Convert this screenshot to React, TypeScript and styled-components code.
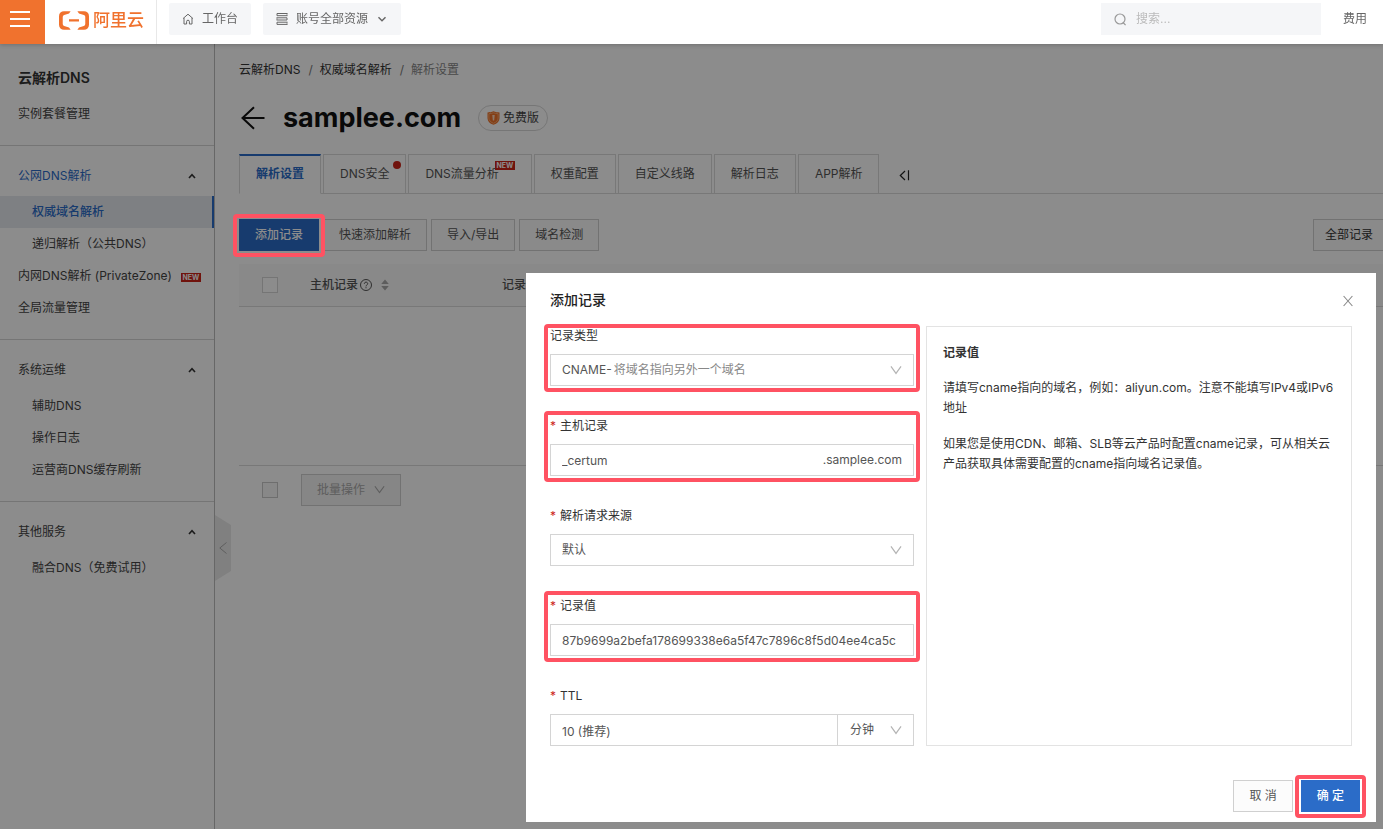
import React from 'react';
import styled, { createGlobalStyle, css } from 'styled-components';

const color = {
  brand: '#f0722e',
  primary: '#2b6cc8',
  danger: '#cc2418',
  mark: '#ff5262',
  text: '#555',
  textDark: '#333',
  textMuted: '#888',
  border: '#d4d4d4',
  line: '#dadada',
  soft: '#f5f6f8',
};

const GlobalStyle = createGlobalStyle`
  *, *::before, *::after { box-sizing: border-box; }
  body {
    margin: 0;
    background: #fff;
    color: ${color.textDark};
    font: 12px/20px Inter, "Noto Sans CJK SC", sans-serif;
  }
  button, input, select { font: inherit; color: inherit; margin: 0; }
  button { cursor: pointer; }
  a { color: inherit; text-decoration: none; }
  h1, h2, h3, p, ul, ol { margin: 0; padding: 0; }
  ul, ol { list-style: none; }
  svg { display: block; flex: none; }
`;

const Page = styled.div`
  display: flex;
  flex-direction: column;
  min-height: 100vh;
`;

/* Top bar */

const TopBar = styled.header`
  position: sticky;
  top: 0;
  z-index: 20;
  display: flex;
  height: 44px;
  padding-right: 16px;
  background: #fff;
  box-shadow: 0 1px 4px rgba(0, 0, 0, 0.2);
  color: #666;
`;

const MenuButton = styled.button`
  display: flex;
  width: 45px;
  padding: 11px 0 0 10px;
  border: 0;
  background: ${color.brand};
`;

const Brand = styled.a`
  display: flex;
  align-items: center;
  gap: 4px;
  padding: 0 12px 4px 14px;
  margin-right: 12px;
  border-right: 1px solid #e8e8e8;
  color: ${color.brand};
  font-size: 17px;
  font-weight: 500;
`;

const TopButton = styled.button`
  display: flex;
  align-items: center;
  height: 32px;
  margin: 3px 12px 0 0;
  padding: 0 13px;
  gap: 8px;
  border: 0;
  border-radius: 2px;
  background: ${color.soft};
  white-space: nowrap;
`;

const SearchBox = styled.label`
  display: flex;
  align-items: center;
  gap: 9px;
  width: 220px;
  height: 32px;
  margin: 3px 22px 0 auto;
  padding: 0 13px;
  background: ${color.soft};
  color: #999;
`;

const SearchInput = styled.input`
  flex: 1;
  min-width: 0;
  padding: 0;
  border: 0;
  outline: 0;
  background: transparent;
  &::placeholder { color: #bbb; }
`;

const TopLink = styled.a`
  height: 32px;
  margin-top: 3px;
  line-height: 32px;
`;

/* Sidebar */

const Body = styled.div`
  display: flex;
  flex: 1;
`;

const Sidebar = styled.nav`
  position: relative;
  flex: none;
  width: 215px;
  padding-top: 4px;
  border-right: 1px solid #bcbcbc;
`;

const NavGroup = styled.section`
  padding: 14px 0 15px;
  & + & { border-top: 1px solid #d6d6d6; }
`;

const NavTitle = styled.h2`
  margin-bottom: 4px;
  padding-left: 18px;
  font-size: 14px;
  font-weight: 600;
  line-height: 32px;
`;

const NavToggle = styled.button<{ $active?: boolean }>`
  display: flex;
  align-items: center;
  justify-content: space-between;
  width: 100%;
  height: 32px;
  margin-bottom: 4px;
  padding: 0 18px;
  border: 0;
  background: transparent;
  color: ${(p) => (p.$active ? color.primary : '#444')};
  svg { color: ${color.textDark}; }
`;

const NavLink = styled.a<{ $sub?: boolean; $active?: boolean }>`
  display: flex;
  align-items: center;
  gap: 9px;
  height: 32px;
  padding-left: ${(p) => (p.$sub ? 32 : 18)}px;
  color: #444;
  white-space: nowrap;
  ${(p) =>
    p.$active &&
    css`
      border-right: 2px solid ${color.primary};
      background: #e6eaee;
      color: ${color.primary};
      font-weight: 500;
    `}
`;

const NewBadge = styled.span`
  width: 20px;
  height: 9px;
  margin-top: 2px;
  background: ${color.danger};
  color: #fff;
  font-size: 7px;
  font-weight: 700;
  line-height: 9px;
  text-align: center;
`;

const CollapseButton = styled.button`
  position: absolute;
  top: 471px;
  left: calc(100% + 1px);
  display: flex;
  align-items: center;
  justify-content: center;
  width: 16px;
  height: 66px;
  padding: 0;
  border: 0;
  background: #eaeaea;
  clip-path: polygon(0 0, 100% 15%, 100% 85%, 0 100%);
  color: #aaa;
`;

/* Main column */

const Main = styled.main`
  flex: 1;
  min-width: 0;
  padding: 16px 0 24px 24px;
  overflow-x: clip;
`;

const Breadcrumb = styled.ol`
  display: flex;
  gap: 8px;
  li:last-child { color: ${color.textMuted}; }
  li + li::before {
    content: "/";
    margin-right: 7px;
    color: #777;
  }
`;

const TitleRow = styled.div`
  display: flex;
  align-items: center;
  margin: 20px 0 18px;
`;

const BackLink = styled.a`
  margin-right: 17px;
  color: #111;
`;

const Domain = styled.h1`
  color: #111;
  font-size: 27px;
  font-weight: 700;
  line-height: 36px;
`;

const PlanTag = styled.span`
  display: flex;
  align-items: center;
  gap: 3px;
  height: 26px;
  margin-left: 17px;
  padding: 0 8px;
  border: 1px solid #d8d8d8;
  border-radius: 13px;
  color: #444;
`;

const TabBar = styled.div`
  display: flex;
  gap: 2px;
  height: 40px;
  border-bottom: 1px solid ${color.line};
`;

const Tab = styled.button<{ $active?: boolean; $wide?: boolean }>`
  position: relative;
  height: 40px;
  padding: 0 ${(p) => (p.$wide ? 32 : 16)}px 0 16px;
  border: 1px solid ${color.line};
  background: #fff;
  color: ${color.text};
  white-space: nowrap;
  ${(p) =>
    p.$active &&
    css`
      padding-bottom: 1px;
      border-top: 2px solid ${color.primary};
      border-bottom-color: #fff;
      color: ${color.primary};
      font-weight: 600;
    `}
`;

const TabBadge = styled(NewBadge)`
  position: absolute;
  top: 6px;
  right: 16px;
  margin: 0;
`;

const TabDot = styled.span`
  position: absolute;
  top: 6px;
  right: 4px;
  width: 8px;
  height: 8px;
  border-radius: 50%;
  background: ${color.danger};
`;

const TabFold = styled.button`
  padding: 2px 18px 0;
  border: 0;
  background: transparent;
  color: #222;
`;

const Toolbar = styled.div`
  display: flex;
  gap: 4px;
  margin: 25px 0 13px;
`;

const Marked = styled.div`
  position: relative;
`;

const Mark = styled.span<{ $top?: number }>`
  position: absolute;
  z-index: 30;
  inset: ${(p) => p.$top ?? -5}px -6px -6px;
  border: 4px solid ${color.mark};
  border-radius: 4px;
  pointer-events: none;
`;

const Button = styled.button<{ $primary?: boolean }>`
  height: 32px;
  padding: 0 15px;
  border: 1px solid ${(p) => (p.$primary ? color.primary : '#d0d0d0')};
  background: ${(p) => (p.$primary ? color.primary : '#fcfcfc')};
  color: ${(p) => (p.$primary ? '#fff' : color.text)};
  font-weight: ${(p) => (p.$primary ? 500 : 400)};
  white-space: nowrap;
`;

const FilterButton = styled(Button)`
  margin-left: auto;
  padding: 0 10px 0 11px;
  border-right: 0;
  color: ${color.textDark};
`;

const RecordTable = styled.table`
  width: 100%;
  border-collapse: collapse;
  table-layout: fixed;
  thead tr { height: 42px; background: #fafafa; }
  tbody tr { height: 159px; }
  tr { border-bottom: 1px solid ${color.line}; }
  th {
    padding: 0;
    color: ${color.text};
    font-weight: 500;
    text-align: left;
    vertical-align: middle;
  }
`;

const CheckColumn = styled.col`
  width: 71px;
`;

const HostColumn = styled.col`
  width: 192px;
`;

const HeadCell = styled.div`
  display: flex;
  align-items: center;
  gap: 2px;
`;

const SortButton = styled.button`
  margin-left: 7px;
  padding: 0;
  border: 0;
  background: transparent;
  color: #aaa;
`;

const Checkbox = styled.input`
  appearance: none;
  display: block;
  width: 16px;
  height: 16px;
  margin-left: 23px;
  border: 1px solid #d6d6d6;
  background: #fff;
  &:disabled { border-color: #c8c8c8; background: #f8f8f8; }
`;

const BatchBar = styled.div`
  display: flex;
  align-items: center;
  gap: 23px;
  padding-top: 8px;
`;

const BatchButton = styled(Button)`
  display: flex;
  align-items: center;
  gap: 9px;
  background: #f4f4f4;
  color: #aaa;
`;

/* Dialog */

const Overlay = styled.div`
  position: fixed;
  inset: 0;
  z-index: 10;
  display: flex;
  align-items: flex-end;
  justify-content: flex-end;
  padding: 7px;
  background: rgba(0, 0, 0, 0.45);
`;

const Dialog = styled.section`
  width: 850px;
  max-width: 100%;
  padding: 17px 24px 10px;
  background: #fff;
`;

const DialogHead = styled.header`
  display: flex;
  align-items: center;
  justify-content: space-between;
  margin-bottom: 16px;
  h2 { font-size: 14px; font-weight: 500; color: #222; }
`;

const CloseButton = styled.button`
  padding: 2px 0 0;
  border: 0;
  background: transparent;
  color: #888;
  svg { margin-right: -1px; }
`;

const DialogBody = styled.div`
  display: flex;
  gap: 12px;
`;

const Form = styled.form`
  display: flex;
  flex: 0 0 364px;
  flex-direction: column;
  gap: 30px;
`;

const Field = styled.div`
  position: relative;
`;

const Label = styled.label<{ $required?: boolean }>`
  display: block;
  margin-bottom: 8px;
  ${(p) =>
    p.$required &&
    css`
      &::before {
        content: "*";
        margin-right: 4px;
        color: ${color.danger};
      }
    `}
`;

const Control = styled.div`
  display: flex;
  align-items: center;
  height: 32px;
  padding: 0 11px;
  border: 1px solid ${color.border};
  background: #fff;
  color: ${color.text};
  svg { color: #b4b4b4; }
`;

const TextInput = styled.input`
  flex: 1;
  min-width: 0;
  height: 30px;
  padding: 0;
  border: 0;
  outline: 0;
  background: transparent;
`;

const Select = styled.select<{ $muted?: boolean }>`
  appearance: none;
  flex: 1;
  min-width: 0;
  height: 30px;
  padding: 0;
  border: 0;
  outline: 0;
  background: transparent;
  color: ${(p) => (p.$muted ? '#888' : color.text)};
`;

const TypeCode = styled.span`
  margin-right: 2px;
`;

const TtlGroup = styled.div`
  display: flex;
`;

const TtlValue = styled(Control)`
  flex: 1;
`;

const TtlUnit = styled(Control)`
  width: 76px;
  padding-left: 12px;
  border-left: 0;
`;

const HelpPanel = styled.aside`
  flex: 1;
  min-width: 0;
  padding: 16px 15px 15px 16px;
  border: 1px solid #e3e3e3;
  h3 { font-size: 12px; font-weight: 600; }
  p { margin-top: 15px; }
  p + p { margin-top: 16px; }
`;

const DialogFoot = styled.footer`
  display: flex;
  justify-content: flex-end;
  gap: 8px;
  margin: 34px -8px 0 0;
`;

/* Icons */

const MenuIcon = () => (
  <svg width="20" height="16" fill="#fff" aria-hidden="true">
    <path d="M0 0h20v2H0zM0 7h20v2H0zM0 14h20v2H0z" />
  </svg>
);

const LogoIcon = () => (
  <svg width="30" height="19" viewBox="0 4.5 24 15" fill="currentColor" aria-hidden="true">
    <path d="M3.996 4.517h5.291L8.01 6.324 4.153 7.506a1.668 1.668 0 0 0-1.165 1.601v5.786a1.668 1.668 0 0 0 1.165 1.6l3.857 1.183 1.277 1.807H3.996A3.996 3.996 0 0 1 0 15.487V8.513a3.996 3.996 0 0 1 3.996-3.996m16.008 0h-5.291l1.277 1.807 3.857 1.182c.715.227 1.17.889 1.165 1.601v5.786a1.668 1.668 0 0 1-1.165 1.6l-3.857 1.183-1.277 1.807h5.291A3.996 3.996 0 0 0 24 15.487V8.513a3.996 3.996 0 0 0-3.996-3.996m-4.007 8.345H8.002v-1.804h7.995Z" />
  </svg>
);

const HomeIcon = () => (
  <svg width="12" height="12" viewBox="0 0 12 12" fill="none" stroke="currentColor" aria-hidden="true">
    <path d="M1 5.6 6 1.2l5 4.4M2 5v6h2.6V8.6a1.4 1.4 0 0 1 2.8 0V11H10V5" />
  </svg>
);

const StackIcon = () => (
  <svg width="12" height="12" viewBox="0 0 12 12" fill="none" stroke="currentColor" aria-hidden="true">
    <path d="M11.500.5H1v2.200h10.500M.5 4.800H11v2.200H.5M11.500 9.200H1v2.200h10.500" />
    <path d="M11 .5v2.200M1 4.800v2.200M11 9.200v2.200" strokeWidth=".6" />
  </svg>
);

const SearchIcon = () => (
  <svg width="13" height="13" viewBox="0 0 13 13" fill="none" stroke="currentColor" strokeWidth="1.2" aria-hidden="true">
    <circle cx="6" cy="6" r="5" />
    <path d="m9 9.500 2.600 2.600" />
  </svg>
);

const Chevron = ({ size = 10 }: { size?: number }) => (
  <svg width={size} height={size} viewBox="0 0 10 10" fill="none" stroke="currentColor" aria-hidden="true">
    <path d="M.8 2 5 7.800 9.200 2" />
  </svg>
);

const FoldUpIcon = () => (
  <svg width="8" height="8" viewBox="0 0 8 8" fill="none" stroke="currentColor" strokeWidth="1.600" aria-hidden="true">
    <path d="M1 6l3-3.400L7 6" />
  </svg>
);

const TopChevron = () => (
  <svg width="12" height="10" viewBox="0 0 12 10" fill="none" stroke="currentColor" strokeWidth="1.400" aria-hidden="true">
    <path d="M2.500 3.200 6 6.800l3.500-3.600" />
  </svg>
);

const CollapseIcon = () => (
  <svg width="8" height="12" viewBox="0 0 8 12" fill="none" stroke="currentColor" aria-hidden="true">
    <path d="M7.500.5.8 6l6.700 5.500" />
  </svg>
);

const BackIcon = () => (
  <svg width="27" height="24" viewBox="0 0 27 24" fill="none" stroke="currentColor" strokeWidth="2" aria-hidden="true">
    <path d="M25.500 12H3.500M15 1.200 3.500 12 15 22.800" />
  </svg>
);

const ShieldIcon = () => (
  <svg width="13" height="14" viewBox="0 0 13 14" aria-hidden="true">
    <path d="M6.500.3c2 .9 4 1.100 6 1.100v5.800c0 3-2.200 5.200-6 6.600C2.700 12.400.5 10.200.5 7.200V1.400c2 0 4-.2 6-1.100z" fill="#f0742a" />
    <path d="M6.500 1.800c1.500.6 3 .8 4.600.9v4.400c0 2.400-1.700 4-4.600 5.200-2.900-1.200-4.600-2.800-4.600-5.200V2.700c1.600-.1 3.100-.3 4.600-.9z" fill="none" stroke="#ffc79c" strokeWidth=".6" />
    <path d="M5.300 4h2.400l-.5 5.400h-1.400z" fill="#ffd9bd" />
  </svg>
);

const FoldIcon = () => (
  <svg width="12" height="12" viewBox="0 0 12 12" fill="none" stroke="currentColor" strokeWidth="1.200" aria-hidden="true">
    <path d="M6 2 1.300 6.500 6 11M9.500 1.200v10" />
  </svg>
);

const HelpIcon = () => (
  <svg width="12" height="12" viewBox="0 0 12 12" fill="none" stroke="currentColor" aria-hidden="true">
    <circle cx="6" cy="6" r="5.500" />
    <path d="M4.300 4.800C4.300 2.600 7.700 2.600 7.700 4.700 7.700 6 6 5.900 6 7.400M6 8.200v1.100" />
  </svg>
);

const SortIcon = () => (
  <svg width="8" height="12" viewBox="0 0 8 12" fill="currentColor" aria-hidden="true">
    <path d="m4 .5 3.800 4.500H.2zM4 11.500.2 7h7.600z" />
  </svg>
);

const CloseIcon = () => (
  <svg width="10" height="12" viewBox="0 0 10 12" fill="none" stroke="currentColor" strokeWidth="1.100" aria-hidden="true">
    <path d="m.6 1 8.800 10M9.400 1 .6 11" />
  </svg>
);

export default function App() {
  return (
    <Page>
      <GlobalStyle />
      <TopBar>
        <MenuButton aria-label="菜单">
          <MenuIcon />
        </MenuButton>
        <Brand href="#home">
          <LogoIcon />
          阿里云
        </Brand>
        <TopButton>
          <HomeIcon />
          工作台
        </TopButton>
        <TopButton>
          <StackIcon />
          账号全部资源
          <TopChevron />
        </TopButton>
        <SearchBox>
          <SearchIcon />
          <SearchInput type="text" placeholder="搜索..." aria-label="搜索" />
        </SearchBox>
        <TopLink href="#billing">费用</TopLink>
      </TopBar>

      <Body>
        <Sidebar>
          <NavGroup>
            <NavTitle>云解析DNS</NavTitle>
            <NavLink href="#plans">实例套餐管理</NavLink>
          </NavGroup>
          <NavGroup>
            <NavToggle $active>
              公网DNS解析
              <FoldUpIcon />
            </NavToggle>
            <NavLink href="#authority" $sub $active>权威域名解析</NavLink>
            <NavLink href="#recursive" $sub>递归解析（公共DNS）</NavLink>
            <NavLink href="#private">
              内网DNS解析 (PrivateZone)
              <NewBadge>NEW</NewBadge>
            </NavLink>
            <NavLink href="#traffic">全局流量管理</NavLink>
          </NavGroup>
          <NavGroup>
            <NavToggle>
              系统运维
              <FoldUpIcon />
            </NavToggle>
            <NavLink href="#secondary" $sub>辅助DNS</NavLink>
            <NavLink href="#log" $sub>操作日志</NavLink>
            <NavLink href="#flush" $sub>运营商DNS缓存刷新</NavLink>
          </NavGroup>
          <NavGroup>
            <NavToggle>
              其他服务
              <FoldUpIcon />
            </NavToggle>
            <NavLink href="#hybrid" $sub>融合DNS（免费试用）</NavLink>
          </NavGroup>
          <CollapseButton aria-label="收起">
            <CollapseIcon />
          </CollapseButton>
        </Sidebar>

        <Main>
          <Breadcrumb>
            <li><a href="#dns">云解析DNS</a></li>
            <li><a href="#authority">权威域名解析</a></li>
            <li>解析设置</li>
          </Breadcrumb>

          <TitleRow>
            <BackLink href="#back" aria-label="返回">
              <BackIcon />
            </BackLink>
            <Domain>samplee.com</Domain>
            <PlanTag>
              <ShieldIcon />
              免费版
            </PlanTag>
          </TitleRow>

          <TabBar role="tablist">
            <Tab role="tab" aria-selected $active>解析设置</Tab>
            <Tab role="tab">DNS安全<TabDot /></Tab>
            <Tab role="tab" $wide>DNS流量分析<TabBadge>NEW</TabBadge></Tab>
            <Tab role="tab">权重配置</Tab>
            <Tab role="tab">自定义线路</Tab>
            <Tab role="tab">解析日志</Tab>
            <Tab role="tab">APP解析</Tab>
            <TabFold aria-label="折叠">
              <FoldIcon />
            </TabFold>
          </TabBar>

          <Toolbar>
            <Marked>
              <Button $primary>添加记录</Button>
              <Mark />
            </Marked>
            <Button>快速添加解析</Button>
            <Button>导入/导出</Button>
            <Button>域名检测</Button>
            <FilterButton>全部记录</FilterButton>
          </Toolbar>

          <RecordTable>
            <colgroup>
              <CheckColumn />
              <HostColumn />
              <col />
            </colgroup>
            <thead>
              <tr>
                <th><Checkbox type="checkbox" aria-label="全选" /></th>
                <th>
                  <HeadCell>
                    主机记录
                    <HelpIcon />
                    <SortButton aria-label="排序"><SortIcon /></SortButton>
                  </HeadCell>
                </th>
                <th>记录类型</th>
              </tr>
            </thead>
            <tbody>
              <tr><td colSpan={3} /></tr>
            </tbody>
          </RecordTable>

          <BatchBar>
            <Checkbox type="checkbox" aria-label="选择全部" disabled />
            <BatchButton disabled>
              批量操作
              <Chevron size={11} />
            </BatchButton>
          </BatchBar>
        </Main>
      </Body>

      <Overlay>
        <Dialog role="dialog" aria-labelledby="dialog-title">
          <DialogHead>
            <h2 id="dialog-title">添加记录</h2>
            <CloseButton aria-label="关闭"><CloseIcon /></CloseButton>
          </DialogHead>

          <DialogBody>
            <Form id="record-form">
              <Field>
                <Label htmlFor="type">记录类型</Label>
                <Control>
                  <TypeCode>CNAME-</TypeCode>
                  <Select id="type" $muted>
                    <option>将域名指向另外一个域名</option>
                  </Select>
                  <Chevron size={12} />
                </Control>
                <Mark $top={-2} />
              </Field>
              <Field>
                <Label htmlFor="host" $required>主机记录</Label>
                <Control>
                  <TextInput id="host" type="text" defaultValue="_certum" />
                  <span>.samplee.com</span>
                </Control>
                <Mark />
              </Field>
              <Field>
                <Label htmlFor="line" $required>解析请求来源</Label>
                <Control>
                  <Select id="line">
                    <option>默认</option>
                  </Select>
                  <Chevron size={12} />
                </Control>
              </Field>
              <Field>
                <Label htmlFor="value" $required>记录值</Label>
                <Control>
                  <TextInput
                    id="value"
                    type="text"
                    defaultValue="87b9699a2befa178699338e6a5f47c7896c8f5d04ee4ca5c"
                  />
                </Control>
                <Mark />
              </Field>
              <Field>
                <Label htmlFor="ttl" $required>TTL</Label>
                <TtlGroup>
                  <TtlValue>
                    <TextInput id="ttl" type="text" defaultValue="10 (推荐)" />
                  </TtlValue>
                  <TtlUnit>
                    <Select aria-label="单位">
                      <option>分钟</option>
                    </Select>
                    <Chevron size={12} />
                  </TtlUnit>
                </TtlGroup>
              </Field>
            </Form>

            <HelpPanel>
              <h3>记录值</h3>
              <p>请填写cname指向的域名，例如：aliyun.com。注意不能填写IPv4或IPv6地址</p>
              <p>如果您是使用CDN、邮箱、SLB等云产品时配置cname记录，可从相关云产品获取具体需要配置的cname指向域名记录值。</p>
            </HelpPanel>
          </DialogBody>

          <DialogFoot>
            <Button>取 消</Button>
            <Marked>
              <Button $primary form="record-form">确 定</Button>
              <Mark />
            </Marked>
          </DialogFoot>
        </Dialog>
      </Overlay>
    </Page>
  );
}
